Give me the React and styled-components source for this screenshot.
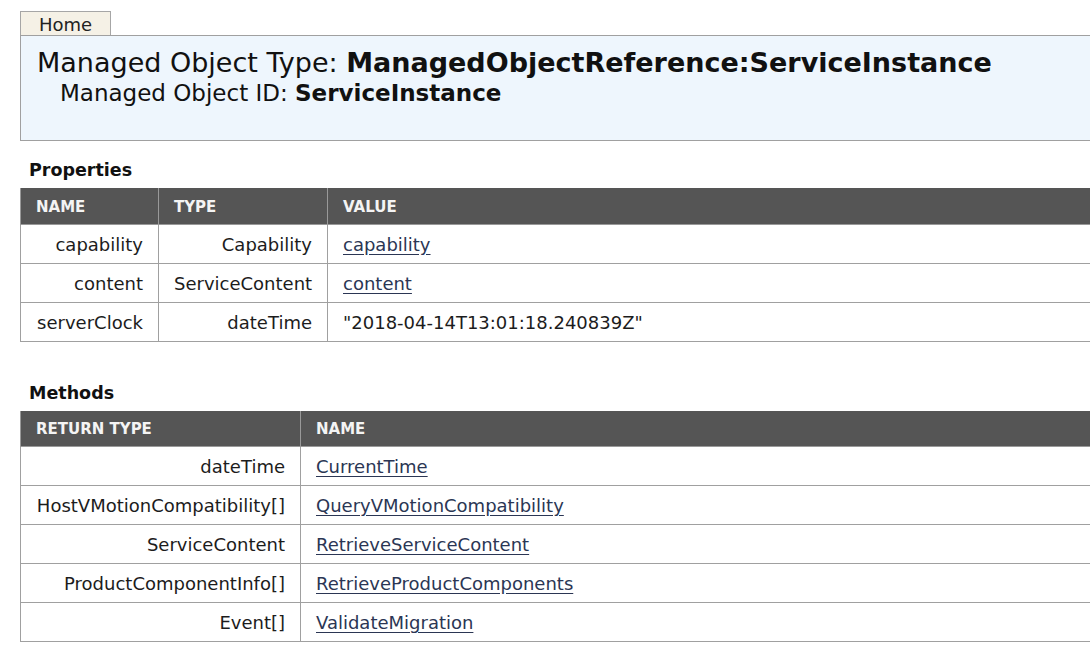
import React from "react";
import styled, { createGlobalStyle } from "styled-components";

const GlobalStyle = createGlobalStyle`
  html, body {
    margin: 0;
    padding: 0;
    background: #ffffff;
    overflow: hidden;
  }
  body {
    font-family: "DejaVu Sans", Verdana, sans-serif;
    color: #1e1e1e;
  }
`;

const Page = styled.div`
  width: 1130px;
  padding: 11px 0 40px 20px;
`;

const Tabs = styled.div`
  display: flex;
`;

const Tab = styled.a`
  display: block;
  width: 91px;
  height: 24px;
  box-sizing: border-box;
  padding-top: 2px;
  text-align: center;
  font-size: 18px;
  line-height: 22px;
  color: #222;
  text-decoration: none;
  background: #f5f1e6;
  border: 1px solid #a6a6a6;
  border-bottom: none;
`;

const HeaderBox = styled.div`
  height: 106px;
  box-sizing: border-box;
  background: #eef6fd;
  border: 1px solid #a0a0a0;
  padding: 10px 16px;
`;

const TypeLine = styled.div`
  font-size: 27px;
  line-height: 33px;
  color: #111;
`;

const IdLine = styled.div`
  font-size: 23px;
  line-height: 29px;
  padding-left: 23px;
  color: #111;
`;

const Strong = styled.b`
  font-weight: bold;
`;

const SectionTitle = styled.h2`
  margin: ${(p) => p.$top}px 0 0 9px;
  height: 28px;
  font-size: 17.5px;
  font-weight: bold;
  line-height: 20px;
  color: #111;
`;

const Table = styled.table`
  border-collapse: collapse;
  width: 1110px;
  table-layout: fixed;
  font-size: 18px;
`;

const Th = styled.th`
  width: ${(p) => (p.$w ? `${p.$w}px` : "auto")};
  height: 36px;
  box-sizing: border-box;
  padding: 2px 15px 0;
  background: #555555;
  color: #f4f4f4;
  font-size: 15px;
  font-weight: bold;
  text-align: left;
  border: 1px solid #999;
  border-top: none;
`;

const Td = styled.td`
  height: 39px;
  box-sizing: border-box;
  padding: 1px 15px 0;
  text-align: ${(p) => (p.$right ? "right" : "left")};
  border: 1px solid #a0a0a0;
  color: #1c1c1c;
  white-space: nowrap;
`;

const Link = styled.a`
  color: #2b3654;
  text-decoration: underline;
  text-underline-offset: 3px;
`;

const properties = [
  { name: "capability", type: "Capability", value: "capability", link: true },
  { name: "content", type: "ServiceContent", value: "content", link: true },
  { name: "serverClock", type: "dateTime", value: '"2018-04-14T13:01:18.240839Z"' },
];

const methods = [
  { ret: "dateTime", name: "CurrentTime" },
  { ret: "HostVMotionCompatibility[]", name: "QueryVMotionCompatibility" },
  { ret: "ServiceContent", name: "RetrieveServiceContent" },
  { ret: "ProductComponentInfo[]", name: "RetrieveProductComponents" },
  { ret: "Event[]", name: "ValidateMigration" },
];

export default function App() {
  return (
    <Page>
      <GlobalStyle />
      <Tabs>
        <Tab href="#">Home</Tab>
      </Tabs>
      <HeaderBox>
        <TypeLine>
          Managed Object Type: <Strong>ManagedObjectReference:ServiceInstance</Strong>
        </TypeLine>
        <IdLine>
          Managed Object ID: <Strong>ServiceInstance</Strong>
        </IdLine>
      </HeaderBox>

      <SectionTitle $top={19}>Properties</SectionTitle>
      <Table>
        <thead>
          <tr>
            <Th $w={138}>NAME</Th>
            <Th $w={169}>TYPE</Th>
            <Th>VALUE</Th>
          </tr>
        </thead>
        <tbody>
          {properties.map((p) => (
            <tr key={p.name}>
              <Td $right>{p.name}</Td>
              <Td $right>{p.type}</Td>
              <Td>{p.link ? <Link href="#">{p.value}</Link> : p.value}</Td>
            </tr>
          ))}
        </tbody>
      </Table>

      <SectionTitle $top={41}>Methods</SectionTitle>
      <Table>
        <thead>
          <tr>
            <Th $w={280}>RETURN TYPE</Th>
            <Th>NAME</Th>
          </tr>
        </thead>
        <tbody>
          {methods.map((m) => (
            <tr key={m.name}>
              <Td $right>{m.ret}</Td>
              <Td>
                <Link href="#">{m.name}</Link>
              </Td>
            </tr>
          ))}
        </tbody>
      </Table>
    </Page>
  );
}
